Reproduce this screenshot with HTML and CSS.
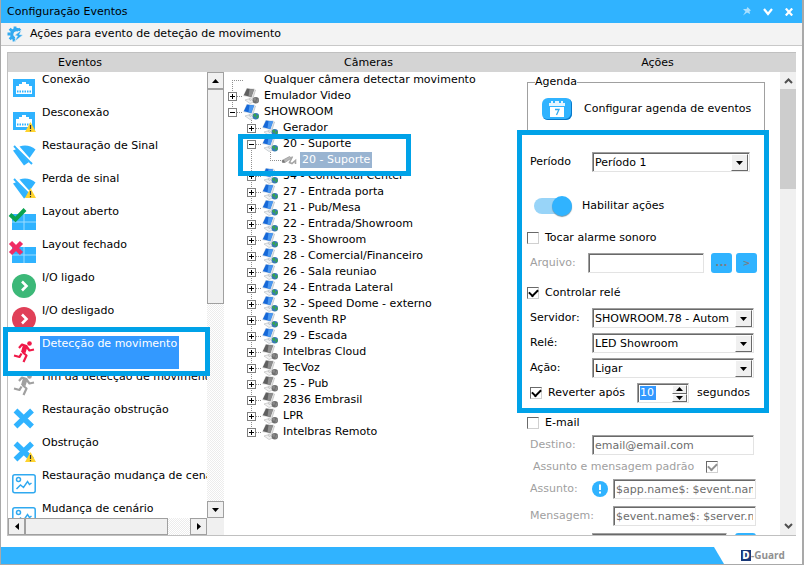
FILE: index.html
```html
<!DOCTYPE html>
<html lang="pt-BR">
<head>
  <meta charset="UTF-8">
  <title>Configuração Eventos</title>
  <link rel="stylesheet" href="styles.css">
</head>
<body>
  <svg class="sprite" aria-hidden="true">
    <symbol id="i-warn" viewBox="0 0 24 24">
      <path d="M18.500 13 L24 23 H13 Z" fill="#ffd42e"/>
      <path d="M18.500 16v4M18.500 21v1.200" stroke="#333" stroke-width="1.200"/>
    </symbol>
    <symbol id="i-net" viewBox="0 0 24 24">
      <rect x="1" y="3" width="22" height="18" fill="#30b3ff"/>
      <path d="M4 18V10h3V8h3V6h4v2h3v2h3v8z" fill="#fff"/>
      <path d="M5 15.500h14" stroke="#30b3ff" stroke-width="2" stroke-dasharray="1.500 1"/>
    </symbol>
    <symbol id="i-signal" viewBox="0 0 24 24">
      <path d="M1 8.500L4.500 7L17 20L12 23.500z" fill="#30b3ff"/>
      <path d="M7.500 4.500C13 2.500 19 3.500 23.500 7.500L17.500 16z" fill="#30b3ff"/>
      <path d="M2 4L20 22" stroke="#30b3ff" stroke-width="2"/>
      <path d="M4.500 4L19.500 19" stroke="#fff" stroke-width="1.400"/>
    </symbol>
    <symbol id="i-layout" viewBox="0 0 24 24">
      <rect y="6" width="24" height="16" fill="#30b3ff"/>
      <path d="M0 14h24M12 6v16" stroke="#9bdcff"/>
    </symbol>
    <symbol id="i-go" viewBox="0 0 24 24">
      <circle cx="12" cy="12" r="12"/>
      <path d="M10 7.500L14.500 12L10 16.500" fill="none" stroke="#fff" stroke-width="2.600"/>
    </symbol>
    <symbol id="i-run" viewBox="0 0 24 24">
      <circle cx="17.500" cy="3.500" r="2.300"/>
      <path d="M7 8L10 4.500L14.500 6L11 12.500L14.500 15.500L11.500 22M9.500 13.500L7.500 17L2 15.500M14.500 6.500L17.500 10.500L22 9.500" fill="none" stroke="currentColor" stroke-width="2.200" stroke-linejoin="round"/>
      <path d="M11 5L15.500 6.500L13.500 13L9 12z"/>
    </symbol>
    <symbol id="i-cross" viewBox="0 0 24 24">
      <path d="M3.500 4.500L20 20.500M20 4.500L3.500 20.500" stroke="#30b3ff" stroke-width="5.500"/>
    </symbol>
    <symbol id="i-scene" viewBox="0 0 24 24">
      <g fill="none" stroke="#30a9f0" stroke-width="1.500">
        <rect x=".8" y="2.800" width="22.400" height="18" rx="2"/>
        <circle cx="6.500" cy="7.500" r="2"/>
        <path d="M4.500 17L8.500 13L11.500 15.500L15.500 9.500L17.500 12.500L19.500 11"/>
      </g>
    </symbol>
    <symbol id="i-server" viewBox="0 0 16 16">
      <path d="M2 12L7 10.500L12 13.500L7 15.500z" fill="#eef1f3" stroke="#b4bac0" stroke-width=".6"/>
      <path d="M10.500 1L12.500 2L10 10L8 12.500L6 11.500L8.500 9z" fill="#e4e8ec" stroke="#a8b0b8" stroke-width=".6"/>
      <path d="M3.500 0L12 .800L9 10L0 8z" fill="#d5dfe8"/>
      <path class="screen" d="M4 .500L11 1.500L8.300 9L.800 7.200z"/>
      <path class="shine" d="M6.500 1L11 1.500L8.300 9L5.500 8.300z"/>
      <circle class="globe" cx="12.800" cy="12.300" r="3.200"/>
      <path class="land" d="M10 11l2-1.800 1.200 1.800-1.200 2.500zM13.500 12l2-1.500v3l-2 1.500z"/>
    </symbol>
    <symbol id="i-camera" viewBox="0 0 16 16">
      <path d="M1 8.500L8.500 4.500L10.500 6L4 10.500L1.500 10.500z" fill="#b8b8b8" stroke="#8c8c8c" stroke-width=".6"/>
      <path d="M1 8.500L3 8L4 10.500H1.500z" fill="#777"/>
      <path d="M11.500 4.500L8.500 10.500L11 11.500L14.500 8.500V12" fill="none" stroke="#a4a4a4" stroke-width="1.600"/>
    </symbol>
    <symbol id="i-down" viewBox="0 0 7 4"><path d="M0 0h7L3.500 4z"/></symbol>
    <symbol id="i-up" viewBox="0 0 7 4"><path d="M0 4h7L3.500 0z"/></symbol>
  </svg>

  <div class="window">
    <header class="titlebar">
      <span>Configuração Eventos</span>
      <div class="window-buttons">
        <button type="button" aria-label="Fixar"><svg class="pin" width="8" height="9" viewBox="0 0 8 9"><path d="M4.500 0L8 3.500L6.500 4L7 7L4 5.500L0 8.500L2.500 4.500L0 2L3.500 2z" fill="#fff"/></svg></button>
        <button type="button" aria-label="Minimizar"><svg width="10" height="8" viewBox="0 0 10 8"><path d="M1 1L5 6L9 1" fill="none" stroke="#fff" stroke-width="2.200"/></svg></button>
        <button type="button" aria-label="Fechar"><svg width="8" height="8" viewBox="0 0 8 8"><path d="M.8 .5L7.200 7.500M7.200 .5L.8 7.500" stroke="#fff" stroke-width="2.200"/></svg></button>
      </div>
    </header>

    <div class="subtitle">
      <svg width="16" height="16" viewBox="0 0 16 16">
        <path d="M11.500 4A4.700 4.700 0 1 0 7.500 12.700" fill="none" stroke="#30a9f0" stroke-width="3.400"/>
        <path d="M8 .5v3M2.700 2.700l2 2M.5 8h3M2.700 13.300l2-2M7 15.500v-3M13.300 2.700l-2 2" stroke="#30a9f0" stroke-width="2.800"/>
        <path d="M14.500 4L7.500 9.500L10.500 10L7.500 15.500L16 9L12.500 8.500z" fill="#30a9f0" stroke="#f3f3f3" stroke-width=".6"/>
      </svg>
      <span>Ações para evento de deteção de movimento</span>
    </div>

    <main class="panel">
      <section class="events">
        <h2>Eventos</h2>
        <div class="events-body">
          <ul class="event-list">
            <li><svg class="icon"><use href="#i-net"/></svg><span>Conexão</span></li>
            <li><svg class="icon"><use href="#i-net"/><use href="#i-warn"/></svg><span>Desconexão</span></li>
            <li><svg class="icon"><use href="#i-signal"/></svg><span>Restauração de Sinal</span></li>
            <li><svg class="icon"><use href="#i-signal"/><use href="#i-warn"/></svg><span>Perda de sinal</span></li>
            <li><svg class="icon"><use href="#i-layout"/><path d="M-2 6.500L3.500 11.500L13 1.500" fill="none" stroke="#0aa350" stroke-width="4"/></svg><span>Layout aberto</span></li>
            <li><svg class="icon"><use href="#i-layout"/><path d="M-1.500 1.500L9.500 12.500M9.500 1.500L-1.500 12.500" stroke="#f02c64" stroke-width="4.500"/></svg><span>Layout fechado</span></li>
            <li><svg class="icon on"><use href="#i-go"/></svg><span>I/O ligado</span></li>
            <li><svg class="icon stopped"><use href="#i-go"/></svg><span>I/O desligado</span></li>
            <li class="selected"><svg class="icon run"><use href="#i-run"/></svg><span>Detecção de movimento</span></li>
            <li><svg class="icon idle"><use href="#i-run"/></svg><span>Fim da detecção de movimento</span></li>
            <li><svg class="icon"><use href="#i-cross"/></svg><span>Restauração obstrução</span></li>
            <li><svg class="icon"><use href="#i-cross"/><use href="#i-warn"/></svg><span>Obstrução</span></li>
            <li><svg class="icon"><use href="#i-scene"/></svg><span>Restauração mudança de cenário</span></li>
            <li><svg class="icon"><use href="#i-scene"/><use href="#i-warn"/></svg><span>Mudança de cenário</span></li>
          </ul>
          <div class="scroll-y">
            <button type="button" aria-label="Rolar para cima"><svg width="7" height="4"><use href="#i-up"/></svg></button>
            <div class="thumb"></div>
            <div class="track"></div>
            <button type="button" aria-label="Rolar para baixo"><svg width="7" height="4"><use href="#i-down"/></svg></button>
          </div>
          <div class="scroll-x">
            <button type="button" aria-label="Rolar para a esquerda"><svg width="4" height="7"><path d="M4 0v7L0 3.500z"/></svg></button>
            <div class="thumb"></div>
            <div class="track"></div>
            <button type="button" aria-label="Rolar para a direita"><svg width="4" height="7"><path d="M0 0v7L4 3.500z"/></svg></button>
          </div>
          <div class="corner"></div>
        </div>
      </section>

      <section class="cameras">
        <h2>Câmeras</h2>
        <ul class="tree">
          <li><div class="node any"><i class="dots"></i><span>Qualquer câmera detectar movimento</span></div></li>
          <li><div class="node gray"><button type="button" class="plus" aria-label="Expandir"></button><i class="dots"></i><svg><use href="#i-server"/></svg><span>Emulador Video</span></div></li>
          <li><div class="node"><button type="button" class="minus" aria-label="Recolher"></button><i class="dots"></i><svg><use href="#i-server"/></svg><span>SHOWROOM</span></div>
            <ul>
              <li><div class="node"><button type="button" class="plus" aria-label="Expandir"></button><i class="dots"></i><svg><use href="#i-server"/></svg><span>Gerador</span></div></li>
              <li><div class="node"><button type="button" class="minus" aria-label="Recolher"></button><i class="dots"></i><svg><use href="#i-server"/></svg><span>20 - Suporte</span></div>
                <ul>
                  <li><div class="node leaf current"><i class="dots"></i><svg><use href="#i-camera"/></svg><span>20 - Suporte</span></div></li>
                </ul>
              </li>
              <li><div class="node"><button type="button" class="plus" aria-label="Expandir"></button><i class="dots"></i><svg><use href="#i-server"/></svg><span>34 - Comercial Center</span></div></li>
              <li><div class="node"><button type="button" class="plus" aria-label="Expandir"></button><i class="dots"></i><svg><use href="#i-server"/></svg><span>27 - Entrada porta</span></div></li>
              <li><div class="node"><button type="button" class="plus" aria-label="Expandir"></button><i class="dots"></i><svg><use href="#i-server"/></svg><span>21 - Pub/Mesa</span></div></li>
              <li><div class="node"><button type="button" class="plus" aria-label="Expandir"></button><i class="dots"></i><svg><use href="#i-server"/></svg><span>22 - Entrada/Showroom</span></div></li>
              <li><div class="node"><button type="button" class="plus" aria-label="Expandir"></button><i class="dots"></i><svg><use href="#i-server"/></svg><span>23 - Showroom</span></div></li>
              <li><div class="node"><button type="button" class="plus" aria-label="Expandir"></button><i class="dots"></i><svg><use href="#i-server"/></svg><span>28 - Comercial/Financeiro</span></div></li>
              <li><div class="node"><button type="button" class="plus" aria-label="Expandir"></button><i class="dots"></i><svg><use href="#i-server"/></svg><span>26 - Sala reuniao</span></div></li>
              <li><div class="node"><button type="button" class="plus" aria-label="Expandir"></button><i class="dots"></i><svg><use href="#i-server"/></svg><span>24 - Entrada Lateral</span></div></li>
              <li><div class="node"><button type="button" class="plus" aria-label="Expandir"></button><i class="dots"></i><svg><use href="#i-server"/></svg><span>32 - Speed Dome - externo</span></div></li>
              <li><div class="node"><button type="button" class="plus" aria-label="Expandir"></button><i class="dots"></i><svg><use href="#i-server"/></svg><span>Seventh RP</span></div></li>
              <li><div class="node"><button type="button" class="plus" aria-label="Expandir"></button><i class="dots"></i><svg><use href="#i-server"/></svg><span>29 - Escada</span></div></li>
              <li><div class="node gray"><button type="button" class="plus" aria-label="Expandir"></button><i class="dots"></i><svg><use href="#i-server"/></svg><span>Intelbras Cloud</span></div></li>
              <li><div class="node gray"><button type="button" class="plus" aria-label="Expandir"></button><i class="dots"></i><svg><use href="#i-server"/></svg><span>TecVoz</span></div></li>
              <li><div class="node gray"><button type="button" class="plus" aria-label="Expandir"></button><i class="dots"></i><svg><use href="#i-server"/></svg><span>25 - Pub</span></div></li>
              <li><div class="node gray"><button type="button" class="plus" aria-label="Expandir"></button><i class="dots"></i><svg><use href="#i-server"/></svg><span>2836 Embrasil</span></div></li>
              <li><div class="node gray"><button type="button" class="plus" aria-label="Expandir"></button><i class="dots"></i><svg><use href="#i-server"/></svg><span>LPR</span></div></li>
              <li><div class="node gray"><button type="button" class="plus" aria-label="Expandir"></button><i class="dots"></i><svg><use href="#i-server"/></svg><span>Intelbras Remoto</span></div></li>
            </ul>
          </li>
        </ul>
      </section>

      <section class="actions">
        <h2>Ações</h2>
        <div class="actions-body">
          <form class="actions-form">
            <fieldset class="agenda">
              <legend>Agenda</legend>
              <button type="button" class="calendar" aria-labelledby="agendaText">
                <svg width="16" height="16" viewBox="0 0 16 16">
                  <path d="M0 2h2V0h2v2h2V0h4v2h2V0h2v2h2v3H0z" fill="#e4f5ff"/>
                  <rect x="1" y="6" width="14" height="10" fill="#fff"/>
                  <path d="M6 8.500h4L7.500 14" fill="none" stroke="#30a9f0" stroke-width="1.300"/>
                </svg>
              </button>
              <span id="agendaText">Configurar agenda de eventos</span>
            </fieldset>

            <div class="row period">
              <label class="name" for="period">Período</label>
              <div class="combo"><select id="period"><option>Período 1</option></select><span class="arrow"><svg width="7" height="4"><use href="#i-down"/></svg></span></div>
            </div>

            <div class="row enable">
              <input type="checkbox" class="switch" id="enable" checked>
              <label for="enable">Habilitar ações</label>
            </div>

            <div class="group alarm">
              <div class="row check">
                <input type="checkbox" id="alarm"><label for="alarm">Tocar alarme sonoro</label>
              </div>
              <div class="row file">
                <label class="name off" for="file">Arquivo:</label>
                <input type="text" id="file" disabled>
                <button type="button" class="small" disabled>...</button>
                <button type="button" class="small play" disabled>&gt;</button>
              </div>
            </div>

            <div class="group">
              <div class="row check">
                <input type="checkbox" id="relay" checked><label for="relay">Controlar relé</label>
              </div>
              <div class="row">
                <label class="name" for="server">Servidor:</label>
                <div class="combo"><select id="server"><option>SHOWROOM.78 - Automação</option></select><span class="arrow"><svg width="7" height="4"><use href="#i-down"/></svg></span></div>
              </div>
              <div class="row">
                <label class="name" for="relayName">Relé:</label>
                <div class="combo"><select id="relayName"><option>LED Showroom</option></select><span class="arrow"><svg width="7" height="4"><use href="#i-down"/></svg></span></div>
              </div>
              <div class="row">
                <label class="name" for="action">Ação:</label>
                <div class="combo"><select id="action"><option>Ligar</option></select><span class="arrow"><svg width="7" height="4"><use href="#i-down"/></svg></span></div>
              </div>
              <div class="row revert">
                <input type="checkbox" id="revert" checked><label for="revert">Reverter após</label>
                <div class="spinner">
                  <input type="text" value="10" aria-label="Tempo para reverter">
                  <div class="steps">
                    <button type="button" aria-label="Aumentar"><svg width="7" height="4"><use href="#i-up"/></svg></button>
                    <button type="button" aria-label="Diminuir"><svg width="7" height="4"><use href="#i-down"/></svg></button>
                  </div>
                </div>
                <span>segundos</span>
              </div>
            </div>

            <div class="group mail">
              <div class="row check">
                <input type="checkbox" id="mail"><label for="mail">E-mail</label>
              </div>
              <div class="row">
                <label class="name off" for="to">Destino:</label>
                <input type="text" id="to" value="email@email.com" disabled>
              </div>
              <div class="row default">
                <label class="off" for="default">Assunto e mensagem padrão</label>
                <input type="checkbox" id="default" checked disabled>
              </div>
              <div class="row wide">
                <label class="name off" for="subject">Assunto:</label>
                <svg class="info" width="16" height="16" viewBox="0 0 16 16"><circle cx="8" cy="8" r="8" fill="#30b3ff"/><path d="M8 3.500v5.500M8 10.500v2" stroke="#fff" stroke-width="2"/></svg>
                <input type="text" id="subject" value="$app.name$: $event.name$" disabled>
              </div>
              <div class="row wide message">
                <label class="name off" for="message">Mensagem:</label>
                <input type="text" id="message" value="$event.name$: $server.name$" disabled>
              </div>
              <div class="row wide attach">
                <input type="text" aria-label="Anexo" disabled>
                <button type="button" class="small" aria-label="Procurar" disabled></button>
              </div>
            </div>
          </form>
          <div class="scroll-flat">
            <svg width="9" height="6" viewBox="0 0 9 6"><path d="M1 5L4.500 1.500L8 5" fill="none" stroke="#505050" stroke-width="2"/></svg>
            <div class="bar"></div>
            <svg width="9" height="6" viewBox="0 0 9 6"><path d="M1 1L4.500 4.500L8 1" fill="none" stroke="#505050" stroke-width="2"/></svg>
          </div>
        </div>
      </section>
      <div class="mark mark-event"></div>
      <div class="mark mark-camera"></div>
      <div class="mark mark-actions"></div>
    </main>

    <footer class="footer">
      <div class="stripe"></div>
      <div class="brand"><b>D</b><span>-Guard</span></div>
    </footer>
  </div>
</body>
</html>
```

FILE: styles.css
```css
* {
  box-sizing: border-box;
}

body {
  margin: 0;
  background: #fff;
  color: #000;
  font: 11px/16px Verdana, "DejaVu Sans", sans-serif;
}

button, input, select {
  font: inherit;
  margin: 0;
  padding: 0;
}

button {
  border: 0;
  background: none;
}

ul {
  list-style: none;
  margin: 0;
  padding: 0;
}

h2 {
  margin: 0;
  height: 19px;
  background: #d4d4d4;
  font-size: 11px;
  font-weight: normal;
  line-height: 19px;
  text-align: center;
}

.sprite {
  display: block;
  width: 0;
  height: 0;
}

.window {
  display: flex;
  flex-direction: column;
  height: 100vh;
  border: solid #a9a9a9;
  border-width: 0 2px 1px 1px;
}

/* Title */
.titlebar {
  display: flex;
  align-items: center;
  justify-content: space-between;
  flex: none;
  height: 23px;
  padding: 0 9px 0 6px;
  background: #30b3ff;
}

.window-buttons {
  display: flex;
  align-items: center;
  gap: 12px;
}

.window-buttons button {
  display: flex;
}

.pin {
  opacity: 0.6;
}

.subtitle {
  display: flex;
  align-items: center;
  flex: none;
  gap: 7px;
  height: 23px;
  padding-left: 6px;
  background: #f3f3f3;
  border-bottom: 1px solid #c8c8c8;
}

/* Three columns */
.panel {
  position: relative;
  display: grid;
  grid-template-columns: 216px 1fr 277px;
  flex: 1;
  min-height: 0;
  margin: 6px 6px 11px;
  border: 1px solid #c0c0c0;
  border-right: 0;
}

.events, .cameras, .actions {
  display: flex;
  flex-direction: column;
  min-width: 0;
  min-height: 0;
}

.events h2 {
  padding-right: 72px;
}

.cameras h2 {
  padding-right: 6px;
}

/* Events */
.events-body {
  display: grid;
  grid-template-columns: 1fr 17px;
  grid-template-rows: 1fr 17px;
  flex: 1;
  min-height: 0;
}

.event-list {
  overflow: hidden;
  min-height: 0;
}

.event-list li {
  display: flex;
  height: 33px;
  padding-left: 4px;
  gap: 4px;
}

.event-list span {
  padding: 0 2px;
  white-space: nowrap;
}

.event-list .selected span {
  background: #3399ff;
  color: #fff;
}

.icon {
  flex: none;
  width: 24px;
  height: 24px;
  margin-top: 4px;
  overflow: visible;
}

.on { fill: #3cb878; }
.stopped { fill: #e04058; }
.run { color: #f01848; fill: #f01848; }
.idle { color: #a0a0a0; fill: #a0a0a0; }

.scroll-y, .scroll-x {
  display: flex;
  min-height: 0;
}

.scroll-y {
  flex-direction: column;
}

.scroll-y button, .scroll-x button {
  display: flex;
  align-items: center;
  justify-content: center;
  flex: none;
  width: 17px;
  height: 17px;
  background: #f0f0f0;
  border: 1px solid #a0a0a0;
}

.thumb {
  background: #f0f0f0;
  border: 1px solid #a0a0a0;
}

.scroll-y .thumb {
  flex: 214;
}

.scroll-y .track {
  flex: 198;
}

.scroll-x .thumb {
  flex: 143;
}

.scroll-x .track {
  flex: 22;
}

.track {
  background: repeating-conic-gradient(#ececec 0 25%, #fff 0 50%) 0 0 / 2px 2px;
}

.corner {
  background: #f0f0f0;
}

/* Camera tree */
.tree {
  --dots: repeating-linear-gradient(#909090 0 1px, transparent 1px 2px);
  padding-left: 4px;
  background: var(--dots) 8px 8px / 1px 32px no-repeat;
}

.tree ul {
  margin-left: 19px;
  background: var(--dots) 4px 0 / 1px calc(100% - 8px) no-repeat;
}

.node {
  display: flex;
  align-items: center;
  height: 16px;
}

.node button {
  width: 9px;
  height: 9px;
  border: 1px solid #808080;
  background: linear-gradient(#000, #000) center / 5px 1px no-repeat, #fff;
}

.node .plus {
  background: linear-gradient(#000, #000) center / 5px 1px no-repeat, linear-gradient(#000, #000) center / 1px 5px no-repeat, #fff;
}

.dots {
  width: 6px;
  height: 1px;
  background: repeating-linear-gradient(90deg, #909090 0 1px, transparent 1px 2px);
}

.any .dots {
  width: 11px;
  margin: 0 16px 0 4px;
}

.leaf .dots {
  width: 11px;
  margin-left: 4px;
}

.node svg {
  width: 16px;
  height: 16px;
}

.node span {
  margin-left: 3px;
  padding: 0 2px;
  white-space: nowrap;
}

.current span {
  background: #99b4d1;
  color: #fff;
}

.screen { fill: #1668d8; }
.shine { fill: #4a98f0; }
.globe { fill: #3878b8; }
.land { fill: #38a848; }
.gray svg { filter: grayscale(1); }

/* Actions */
.actions-body {
  display: flex;
  flex: 1;
  min-height: 0;
}

.actions-form {
  flex: 1;
  min-width: 0;
  overflow: hidden;
  padding: 2px 15px 0 8px;
}

.agenda {
  display: flex;
  align-items: center;
  gap: 12px;
  height: 58px;
  margin: 0 0 20px;
  padding: 0 0 4px 14px;
  border: 1px solid #a0a0a0;
}

.agenda legend {
  margin-left: -7px;
  padding: 0;
}

.agenda span {
  white-space: nowrap;
}

.calendar {
  display: flex;
  align-items: center;
  justify-content: center;
  flex: none;
  width: 30px;
  height: 22px;
  border-radius: 6px;
  background: #30b3ff;
  box-shadow: inset -1px -1px #0878c8;
}

.row {
  display: flex;
  align-items: center;
  height: 20px;
  padding: 0 11px 0 3px;
  white-space: nowrap;
}

.name {
  flex: none;
  width: 62px;
}

.row .off {
  color: #a0a0a0;
}

.group {
  display: flex;
  flex-direction: column;
  gap: 5px;
  margin-top: 10px;
}

.period {
  padding-right: 15px;
}

.enable {
  gap: 10px;
  margin-top: 24px;
  padding-left: 7px;
}

.alarm {
  margin-top: 12px;
}

.check {
  gap: 6px;
  padding-left: 0;
}

input[type="text"], .combo, .spinner {
  height: 20px;
  background: #fff;
  border: 1px solid;
  border-color: #a0a0a0 #e3e3e3 #e3e3e3 #a0a0a0;
  box-shadow: inset 1px 1px #696969;
}

input[type="text"] {
  flex: 1;
  min-width: 0;
  padding: 0 2px;
  color: #6d6d6d;
}

input[type="checkbox"] {
  flex: none;
  display: grid;
  place-items: center;
  appearance: none;
  width: 12px;
  height: 12px;
  background: #fff;
  border: 1px solid;
  border-color: #696969 #d0d0d0 #d0d0d0 #696969;
}

input[type="checkbox"]:checked::before {
  content: "";
  width: 7px;
  height: 4px;
  margin-bottom: 3px;
  border: solid #000;
  border-width: 0 0 2px 2px;
  transform: rotate(-45deg);
}

input[type="checkbox"]:disabled::before {
  border-color: #909090;
}

input.switch {
  place-items: center end;
  width: 38px;
  height: 16px;
  border: 0;
  border-radius: 8px;
  background: #98d4f8;
}

input.switch:checked::before {
  width: 20px;
  height: 20px;
  margin: -2px 0;
  border: 0;
  border-radius: 50%;
  background: #30b3ff;
  box-shadow: 0 1px 1px #7898a8;
  transform: none;
}

.combo {
  display: grid;
  grid-template-columns: 1fr 18px;
  flex: 1;
  min-width: 0;
}

.combo select {
  grid-area: 1 / 1 / 2 / 3;
  min-width: 0;
  width: 100%;
  padding: 2px 24px 0 2px;
  appearance: none;
  border: 0;
  background: none;
  color: #000;
}

.arrow {
  grid-area: 1 / 2;
  display: flex;
  align-items: center;
  justify-content: center;
  margin: 1px 1px 0 0;
  pointer-events: none;
}

.arrow, .steps button {
  background: #f0f0f0;
  border: 1px solid;
  border-color: #fff #696969 #696969 #fff;
}

.file {
  gap: 4px;
  padding-right: 8px;
}

.file .name {
  width: 54px;
}

.file input[type="text"] {
  margin-right: 3px;
}

.small {
  flex: none;
  width: 21px;
  height: 20px;
  border-radius: 3px;
  background: #30b3ff;
  color: #7a7f88;
  font-weight: bold;
}

.play {
  font-size: 9px;
}

.revert label {
  margin: 0 12px 0 6px;
}

.spinner {
  display: flex;
  width: 52px;
  margin-right: 8px;
}

.spinner input[type="text"] {
  flex: none;
  align-self: center;
  width: 16px;
  height: 14px;
  margin-left: 2px;
  padding: 0;
  border: 0;
  box-shadow: none;
  background: #3399ff;
  color: #fff;
}

.steps {
  display: flex;
  flex-direction: column;
  width: 15px;
  margin: 1px 1px 0 auto;
}

.steps button {
  display: flex;
  align-items: center;
  justify-content: center;
  flex: 1;
}

.mail {
  gap: 2px;
}

.default {
  gap: 12px;
  padding-left: 6px;
}

.wide {
  padding-right: 9px;
}

.info {
  flex: none;
  margin-right: 5px;
}

.message, .attach {
  margin-top: 5px;
}

.message .name {
  width: 83px;
}

.attach {
  gap: 8px;
  padding-left: 65px;
}

.scroll-flat {
  display: flex;
  flex-direction: column;
  align-items: center;
  justify-content: space-between;
  width: 16px;
  padding: 6px 0;
  background: #f0f0f0;
}

.scroll-flat .bar {
  align-self: stretch;
  height: 100px;
  margin: 5px 0 auto;
  background: #cdcdcd;
}

/* Highlight frames over the content */
.mark {
  position: absolute;
  border: 5px solid #00a2e8;
  pointer-events: none;
}

.mark-event {
  left: -5px;
  top: 274px;
  width: 207px;
  height: 49px;
}

.mark-camera {
  left: 230px;
  top: 81px;
  width: 173px;
  height: 42px;
}

.mark-actions {
  right: 27px;
  top: 77px;
  width: 252px;
  height: 283px;
}

/* Footer */
.footer {
  display: flex;
  flex: none;
  height: 17px;
}

.stripe {
  flex: 1;
  background: #30b3ff;
  clip-path: polygon(0 0, calc(100% - 10px) 0, 100% 100%, 0 100%);
}

.brand {
  display: flex;
  align-items: center;
  width: 78px;
  padding-left: 17px;
  color: #909090;
  font: bold 10px/11px "Open Sans", sans-serif;
}

.brand b {
  width: 10px;
  background: #183878;
  color: #fff;
  text-align: center;
}
```
